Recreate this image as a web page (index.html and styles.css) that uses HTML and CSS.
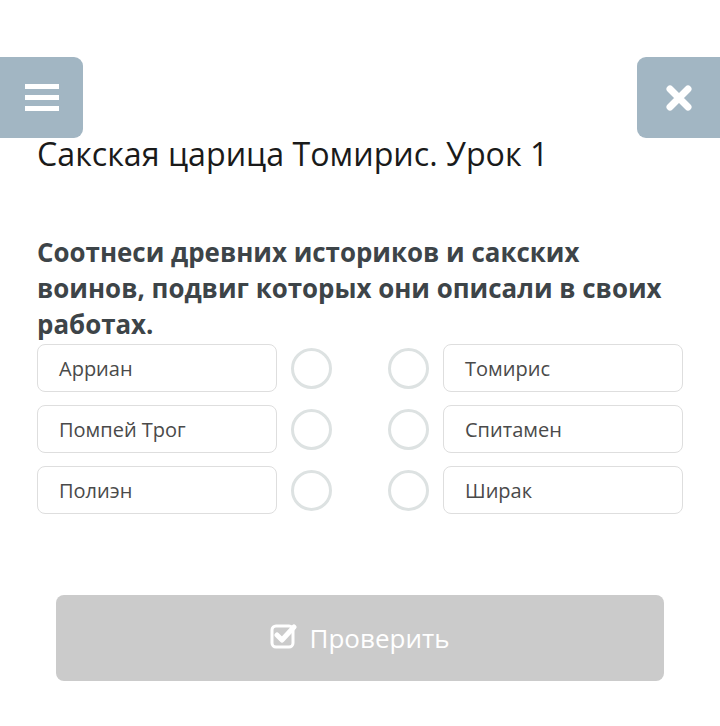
FILE: index.html
```html
<!DOCTYPE html>
<html lang="ru">
<head>
<meta charset="utf-8">
<link rel="stylesheet" href="styles.css">
</head>
<body>
<div class="page">
  <div class="topbar">
    <div class="btn-menu">
      <svg width="34" height="28" viewBox="0 0 34 28"><rect x="0" y="0" width="34" height="5" fill="#fff"/><rect x="0" y="11" width="34" height="5" fill="#fff"/><rect x="0" y="22" width="34" height="5" fill="#fff"/></svg>
    </div>
    <div class="btn-close">
      <svg width="28" height="28" viewBox="0 0 28 28"><path d="M5 5 L23 23 M23 5 L5 23" stroke="#fff" stroke-width="7" stroke-linecap="round"/></svg>
    </div>
  </div>
  <h1 class="title">Сакская царица Томирис. Урок 1</h1>
  <p class="question">Соотнеси древних историков и сакских воинов, подвиг которых они описали в своих работах.</p>
  <div class="match">
    <div class="row"><div class="box">Арриан</div><div class="dot"></div><div class="dot"></div><div class="box">Томирис</div></div>
    <div class="row"><div class="box">Помпей Трог</div><div class="dot"></div><div class="dot"></div><div class="box">Спитамен</div></div>
    <div class="row"><div class="box">Полиэн</div><div class="dot"></div><div class="dot"></div><div class="box">Ширак</div></div>
  </div>
  <div class="check">
    <svg width="27" height="27" viewBox="0 0 27 27"><rect x="2" y="3" width="21" height="21" rx="4" fill="none" stroke="#fff" stroke-width="3"/><path d="M7 12 L12 17 L24 4" fill="none" stroke="#fff" stroke-width="5" stroke-linecap="round" stroke-linejoin="round"/></svg>
    <span>Проверить</span>
  </div>
</div>
</body>
</html>
```
FILE: styles.css
```css
html, body { margin: 0; padding: 0; background: #fff; }
body { font-family: "Open Sans", "Noto Sans", sans-serif; width: 720px; height: 726px; overflow: hidden; }
.page { padding-top: 57px; }
.topbar { display: flex; justify-content: space-between; height: 81px; }
.btn-menu, .btn-close { width: 83px; height: 81px; background: #a2b6c3; display: flex; align-items: center; justify-content: center; }
.btn-menu { border-radius: 0 9px 9px 0; }
.btn-close { border-radius: 9px 0 0 9px; }
.title { margin: -4px 0 0 37px; font-weight: 400; font-size: 32.2px; line-height: 40px; color: #1a1a1a; }
.question { margin: 60px 0 0 37px; width: 640px; font-weight: 700; font-size: 25.9px; line-height: 36px; color: #3d4448; }
.match { margin: 2px 0 0 37px; display: flex; flex-direction: column; gap: 13px; }
.row { display: flex; align-items: center; height: 48px; }
.box { width: 240px; height: 48px; border: 1.5px solid #dedede; border-radius: 8px; box-sizing: border-box; padding-left: 21px; display: flex; align-items: center; font-size: 20px; color: #4a4a4a; }
.dot { width: 41px; height: 41px; box-sizing: border-box; border: 3px solid #dde2e2; border-radius: 50%; }
.box + .dot { margin-left: 14px; }
.dot + .dot { margin-left: 56px; }
.dot + .box { margin-left: 14px; }
.check { margin: 81px 0 0 56px; width: 608px; height: 86px; background: #cbcbcb; border-radius: 8px; display: flex; align-items: center; justify-content: center; gap: 12px; color: #fff; font-size: 26px; }
.check svg { margin-top: -4px; }
```
